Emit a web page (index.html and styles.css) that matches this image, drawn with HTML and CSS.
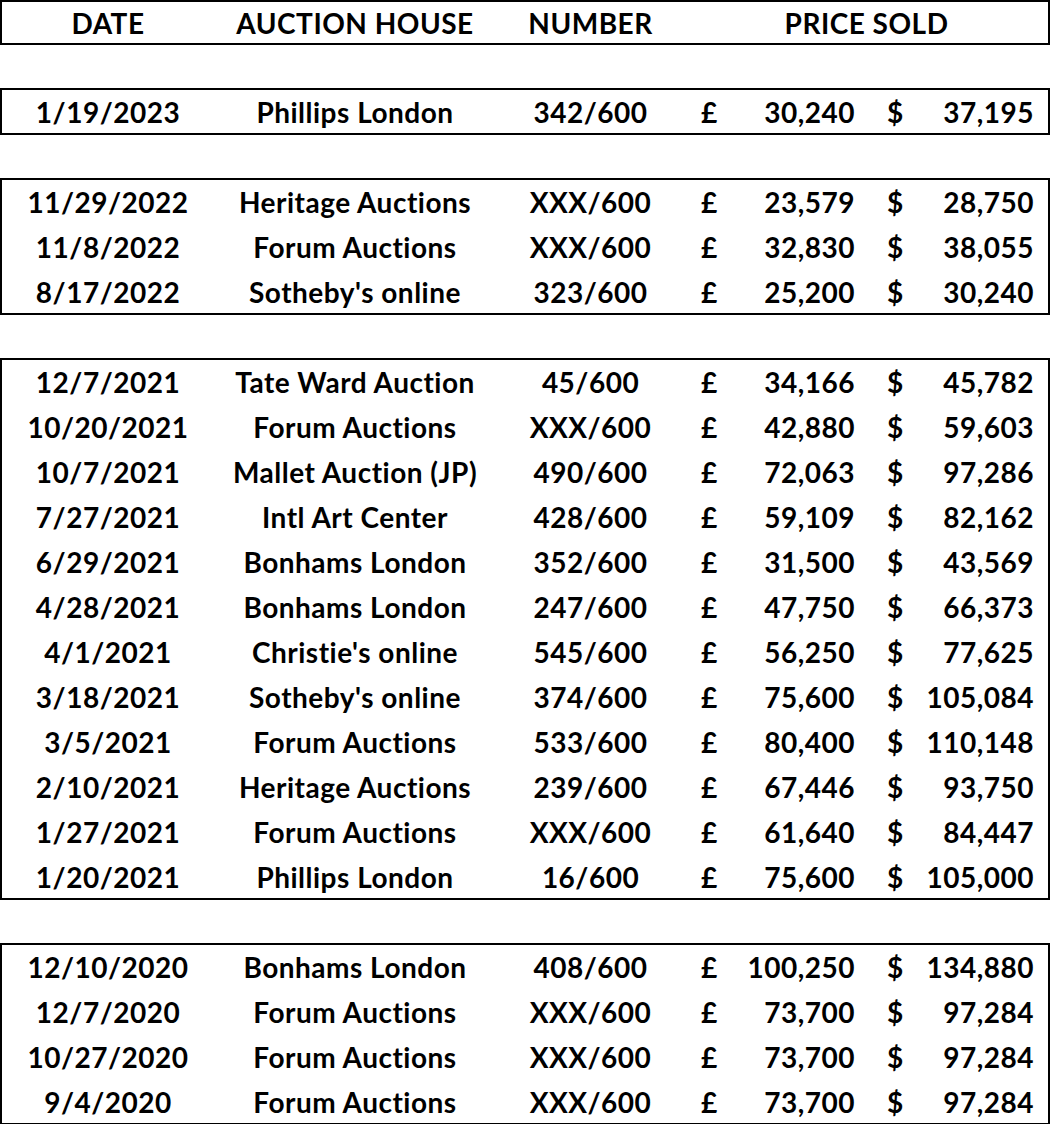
FILE: index.html
```html
<!DOCTYPE html>
<html lang="en">
<head>
<meta charset="utf-8">
<title>Auction Results</title>
<link rel="stylesheet" href="styles.css">
</head>
<body>
<div class="sheet">
  <div class="group header">
    <div class="row">
      <div class="c date">DATE</div>
      <div class="c house">AUCTION HOUSE</div>
      <div class="c num">NUMBER</div>
      <div class="c price">PRICE SOLD</div>
    </div>
  </div>

  <div class="group">
    <div class="rows">
      <div class="row"><div class="c date">1/19/2023</div><div class="c house">Phillips London</div><div class="c num">342/600</div><div class="c gbp"><span>£</span><span>30,240</span></div><div class="c usd"><span>$</span><span>37,195</span></div></div>
    </div>
  </div>

  <div class="group">
    <div class="rows">
      <div class="row"><div class="c date">11/29/2022</div><div class="c house">Heritage Auctions</div><div class="c num">XXX/600</div><div class="c gbp"><span>£</span><span>23,579</span></div><div class="c usd"><span>$</span><span>28,750</span></div></div>
      <div class="row"><div class="c date">11/8/2022</div><div class="c house">Forum Auctions</div><div class="c num">XXX/600</div><div class="c gbp"><span>£</span><span>32,830</span></div><div class="c usd"><span>$</span><span>38,055</span></div></div>
      <div class="row"><div class="c date">8/17/2022</div><div class="c house">Sotheby's online</div><div class="c num">323/600</div><div class="c gbp"><span>£</span><span>25,200</span></div><div class="c usd"><span>$</span><span>30,240</span></div></div>
    </div>
  </div>

  <div class="group">
    <div class="rows">
      <div class="row"><div class="c date">12/7/2021</div><div class="c house">Tate Ward Auction</div><div class="c num">45/600</div><div class="c gbp"><span>£</span><span>34,166</span></div><div class="c usd"><span>$</span><span>45,782</span></div></div>
      <div class="row"><div class="c date">10/20/2021</div><div class="c house">Forum Auctions</div><div class="c num">XXX/600</div><div class="c gbp"><span>£</span><span>42,880</span></div><div class="c usd"><span>$</span><span>59,603</span></div></div>
      <div class="row"><div class="c date">10/7/2021</div><div class="c house">Mallet Auction (JP)</div><div class="c num">490/600</div><div class="c gbp"><span>£</span><span>72,063</span></div><div class="c usd"><span>$</span><span>97,286</span></div></div>
      <div class="row"><div class="c date">7/27/2021</div><div class="c house">Intl Art Center</div><div class="c num">428/600</div><div class="c gbp"><span>£</span><span>59,109</span></div><div class="c usd"><span>$</span><span>82,162</span></div></div>
      <div class="row"><div class="c date">6/29/2021</div><div class="c house">Bonhams London</div><div class="c num">352/600</div><div class="c gbp"><span>£</span><span>31,500</span></div><div class="c usd"><span>$</span><span>43,569</span></div></div>
      <div class="row"><div class="c date">4/28/2021</div><div class="c house">Bonhams London</div><div class="c num">247/600</div><div class="c gbp"><span>£</span><span>47,750</span></div><div class="c usd"><span>$</span><span>66,373</span></div></div>
      <div class="row"><div class="c date">4/1/2021</div><div class="c house">Christie's online</div><div class="c num">545/600</div><div class="c gbp"><span>£</span><span>56,250</span></div><div class="c usd"><span>$</span><span>77,625</span></div></div>
      <div class="row"><div class="c date">3/18/2021</div><div class="c house">Sotheby's online</div><div class="c num">374/600</div><div class="c gbp"><span>£</span><span>75,600</span></div><div class="c usd"><span>$</span><span>105,084</span></div></div>
      <div class="row"><div class="c date">3/5/2021</div><div class="c house">Forum Auctions</div><div class="c num">533/600</div><div class="c gbp"><span>£</span><span>80,400</span></div><div class="c usd"><span>$</span><span>110,148</span></div></div>
      <div class="row"><div class="c date">2/10/2021</div><div class="c house">Heritage Auctions</div><div class="c num">239/600</div><div class="c gbp"><span>£</span><span>67,446</span></div><div class="c usd"><span>$</span><span>93,750</span></div></div>
      <div class="row"><div class="c date">1/27/2021</div><div class="c house">Forum Auctions</div><div class="c num">XXX/600</div><div class="c gbp"><span>£</span><span>61,640</span></div><div class="c usd"><span>$</span><span>84,447</span></div></div>
      <div class="row"><div class="c date">1/20/2021</div><div class="c house">Phillips London</div><div class="c num">16/600</div><div class="c gbp"><span>£</span><span>75,600</span></div><div class="c usd"><span>$</span><span>105,000</span></div></div>
    </div>
  </div>

  <div class="group">
    <div class="rows">
      <div class="row"><div class="c date">12/10/2020</div><div class="c house">Bonhams London</div><div class="c num">408/600</div><div class="c gbp"><span>£</span><span>100,250</span></div><div class="c usd"><span>$</span><span>134,880</span></div></div>
      <div class="row"><div class="c date">12/7/2020</div><div class="c house">Forum Auctions</div><div class="c num">XXX/600</div><div class="c gbp"><span>£</span><span>73,700</span></div><div class="c usd"><span>$</span><span>97,284</span></div></div>
      <div class="row"><div class="c date">10/27/2020</div><div class="c house">Forum Auctions</div><div class="c num">XXX/600</div><div class="c gbp"><span>£</span><span>73,700</span></div><div class="c usd"><span>$</span><span>97,284</span></div></div>
      <div class="row"><div class="c date">9/4/2020</div><div class="c house">Forum Auctions</div><div class="c num">XXX/600</div><div class="c gbp"><span>£</span><span>73,700</span></div><div class="c usd"><span>$</span><span>97,284</span></div></div>
    </div>
  </div>
</div>
</body>
</html>
```

FILE: styles.css
```css
html, body {
  margin: 0;
  padding: 0;
  background: #ffffff;
}

.sheet {
  width: 1050px;
  font-family: Lato, "Liberation Sans", sans-serif;
  font-weight: 700;
  font-size: 28px;
  letter-spacing: 0.5px;
  color: #000000;
}

.group {
  border: 2px solid #000000;
  margin-top: 43px;
}

.group.header {
  margin-top: 0;
}

.rows {
  margin: -1px 0;
}

.row {
  display: grid;
  grid-template-columns: 212px 282px 189px 183px 180px;
  box-sizing: border-box;
  height: 45px;
  padding-top: 2px;
  align-items: center;
  line-height: 43px;
  white-space: nowrap;
}

.header .row {
  height: 41px;
  line-height: 39px;
  grid-template-columns: 212px 282px 189px 363px;
}

.c {
  text-align: center;
}

.gbp {
  display: flex;
  justify-content: space-between;
  padding: 0 13px 0 16px;
}

.usd {
  display: flex;
  justify-content: space-between;
  padding: 0 14px 0 19px;
}
```
